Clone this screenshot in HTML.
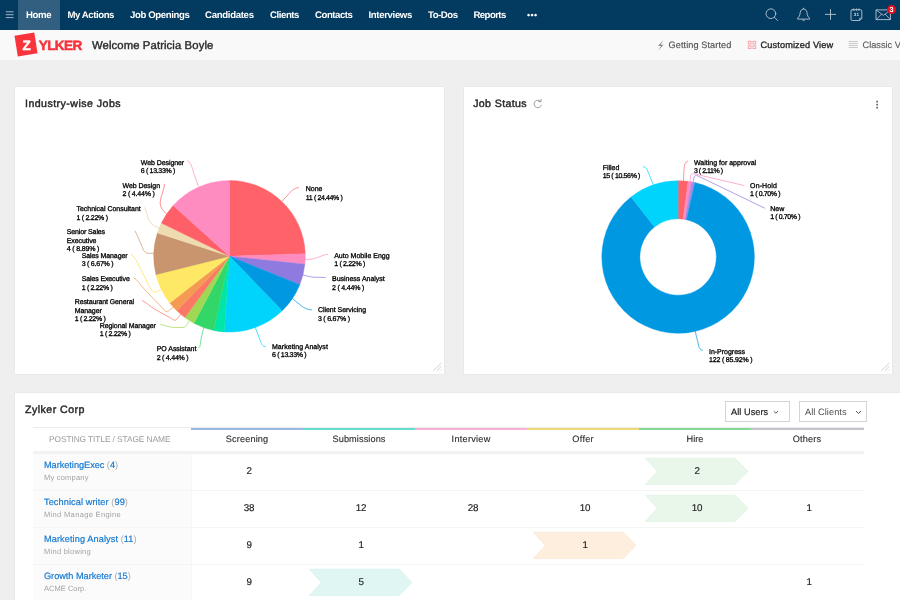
<!DOCTYPE html>
<html><head><meta charset="utf-8"><title>Zylker Recruit</title>
<style>
html,body{margin:0;padding:0;}
body{width:900px;height:600px;overflow:hidden;background:#efefef;font-family:"Liberation Sans", sans-serif;position:relative;}
.t{position:absolute;white-space:nowrap;font-family:"Liberation Sans", sans-serif;}
.t i{font-style:normal;}
.g{font-weight:400;color:#a8a8a8;-webkit-text-stroke:0;}
.abs{position:absolute;}
#nav{left:0;top:0;width:900px;height:30px;background:#033a60;}
#home{left:18px;top:0;width:41.5px;height:30px;background:#325f80;}
#sub{left:0;top:30px;width:900px;height:30px;background:#f9f9f9;}
.card{background:#fff;box-shadow:0 0 1.5px rgba(0,0,0,0.10);}
#c1{left:15px;top:87px;width:429px;height:287px;}
#c2{left:464px;top:87px;width:428px;height:287px;}
#c3{left:15px;top:393px;width:900px;height:220px;}
#logo{left:16.2px;top:33.95px;width:20.2px;height:20.7px;background:#f9343c;transform:rotate(-9deg);}
.dd{border:1px solid #d4d4d4;background:#fff;box-sizing:border-box;height:20.5px;top:401px;}
#firstcol{left:33px;top:453.5px;width:157.5px;height:147px;background:#fbfbfb;border-right:1px solid #f7f7f7;}
#thead{left:33px;top:427.2px;width:831px;height:0.8px;background:#ececec;}
#hband{left:33px;top:451px;width:831px;height:2.8px;background:#f2f2f2;}
.rs{left:33px;width:831px;height:1px;background:#f5f5f5;}
.st{top:428px;height:2px;width:112px;}
</style></head><body>
<div id="nav" class="abs"></div><div id="home" class="abs"></div>
<div id="sub" class="abs"></div>
<div id="logo" class="abs"></div>
<div id="c1" class="abs card"></div><div id="c2" class="abs card"></div><div id="c3" class="abs card"></div>
<div class="abs dd" style="left:725px;width:65px;"></div><div class="abs dd" style="left:799px;width:68px;"></div>
<div id="firstcol" class="abs"></div>
<div id="thead" class="abs"></div><div id="hband" class="abs"></div>
<div class="abs rs" style="top:489.5px"></div><div class="abs rs" style="top:526.5px"></div><div class="abs rs" style="top:563.5px"></div>
<div class="abs st" style="left:191px;background:#97b8df"></div>
<div class="abs st" style="left:303px;background:#68dccf"></div>
<div class="abs st" style="left:415px;background:#f7b1d4"></div>
<div class="abs st" style="left:527px;background:#ecd978"></div>
<div class="abs st" style="left:639px;background:#85da95"></div>
<div class="abs st" style="left:751px;width:113px;background:#c4c4cc"></div>
<svg class="abs" style="left:0;top:0" width="900" height="600" viewBox="0 0 900 600">
<path d="M229.50,256.30L229.50,180.50A75.8,75.8 0 0 1 305.25,253.65Z" fill="#ff6269" stroke="#ff6269" stroke-width="0.4"/>
<path d="M229.50,256.30L305.25,253.65A75.8,75.8 0 0 1 304.88,264.22Z" fill="#ff8bbf" stroke="#ff8bbf" stroke-width="0.4"/>
<path d="M229.50,256.30L304.88,264.22A75.8,75.8 0 0 1 299.78,284.70Z" fill="#8f7be0" stroke="#8f7be0" stroke-width="0.4"/>
<path d="M229.50,256.30L299.78,284.70A75.8,75.8 0 0 1 282.16,310.83Z" fill="#0099e1" stroke="#0099e1" stroke-width="0.4"/>
<path d="M229.50,256.30L282.16,310.83A75.8,75.8 0 0 1 224.21,331.92Z" fill="#00d4fc" stroke="#00d4fc" stroke-width="0.4"/>
<path d="M229.50,256.30L224.21,331.92A75.8,75.8 0 0 1 213.74,330.44Z" fill="#00e5a8" stroke="#00e5a8" stroke-width="0.4"/>
<path d="M229.50,256.30L213.74,330.44A75.8,75.8 0 0 1 193.91,323.23Z" fill="#33d768" stroke="#33d768" stroke-width="0.4"/>
<path d="M229.50,256.30L193.91,323.23A75.8,75.8 0 0 1 184.95,317.62Z" fill="#a0d855" stroke="#a0d855" stroke-width="0.4"/>
<path d="M229.50,256.30L184.95,317.62A75.8,75.8 0 0 1 176.84,310.83Z" fill="#fb7864" stroke="#fb7864" stroke-width="0.4"/>
<path d="M229.50,256.30L176.84,310.83A75.8,75.8 0 0 1 169.77,302.97Z" fill="#f59a52" stroke="#f59a52" stroke-width="0.4"/>
<path d="M229.50,256.30L169.77,302.97A75.8,75.8 0 0 1 155.95,274.64Z" fill="#ffe866" stroke="#ffe866" stroke-width="0.4"/>
<path d="M229.50,256.30L155.95,274.64A75.8,75.8 0 0 1 157.41,232.88Z" fill="#c8956f" stroke="#c8956f" stroke-width="0.4"/>
<path d="M229.50,256.30L157.41,232.88A75.8,75.8 0 0 1 161.37,223.07Z" fill="#eedcb0" stroke="#eedcb0" stroke-width="0.4"/>
<path d="M229.50,256.30L161.37,223.07A75.8,75.8 0 0 1 173.17,205.58Z" fill="#ff5f66" stroke="#ff5f66" stroke-width="0.4"/>
<path d="M229.50,256.30L173.17,205.58A75.8,75.8 0 0 1 229.50,180.50Z" fill="#ff8cc0" stroke="#ff8cc0" stroke-width="0.4"/>
<path d="M678.10,180.70A76.3,76.3 0 0 1 688.20,181.37L683.16,219.14A38.2,38.2 0 0 0 678.10,218.80Z" fill="#ff6269" stroke="#ff6269" stroke-width="0.4"/>
<path d="M688.20,181.37A76.3,76.3 0 0 1 691.53,181.89L684.83,219.40A38.2,38.2 0 0 0 683.16,219.14Z" fill="#ff8cc0" stroke="#ff8cc0" stroke-width="0.4"/>
<path d="M691.53,181.89A76.3,76.3 0 0 1 694.84,182.56L686.48,219.73A38.2,38.2 0 0 0 684.83,219.40Z" fill="#a98be8" stroke="#a98be8" stroke-width="0.4"/>
<path d="M694.84,182.56A76.3,76.3 0 1 1 631.10,196.90L654.57,226.91A38.2,38.2 0 1 0 686.48,219.73Z" fill="#0099e1" stroke="#0099e1" stroke-width="0.4"/>
<path d="M631.10,196.90A76.3,76.3 0 0 1 678.10,180.70L678.10,218.80A38.2,38.2 0 0 0 654.57,226.91Z" fill="#00d4fc" stroke="#00d4fc" stroke-width="0.4"/>
<path d="M187.5,160.8 C190.5,161.5 192,167 193.5,172.5 L198.3,186" fill="none" stroke="#ff8cc0" stroke-width="1" stroke-opacity="0.7" stroke-linecap="round"/>
<path d="M164.5,184.2 C164.5,190 160.5,196 160.2,202 C160,207 162,210 166.5,213.7" fill="none" stroke="#ff5f66" stroke-width="1" stroke-opacity="0.7" stroke-linecap="round"/>
<path d="M144.7,207.7 C147,212 147,217 149.2,220.5 C151,224 154,226 159.3,228" fill="none" stroke="#e8d19d" stroke-width="1" stroke-opacity="0.7" stroke-linecap="round"/>
<path d="M135,231 C138,236 139,240 141,244 C143,249 144,253.3 148,253.3 L153.8,253.3" fill="none" stroke="#c8956f" stroke-width="1" stroke-opacity="0.7" stroke-linecap="round"/>
<path d="M131.4,254.5 C135,257 137,262 139,265.6 L150.1,287.7 C151.5,291 153,293 155.5,292 L160.4,290.1" fill="none" stroke="#ffe050" stroke-width="1" stroke-opacity="0.7" stroke-linecap="round"/>
<path d="M133.9,277.9 C138,280 140,284.5 143.7,288.5 L162.7,308.3 C164.5,310.5 166,313 168.5,311 L173,307.2" fill="none" stroke="#f59a52" stroke-width="1" stroke-opacity="0.7" stroke-linecap="round"/>
<path d="M142.2,300.7 C146,302 149,305.5 153.2,308.3 L170.7,318.1 C173,319.5 175,321.5 177,319 L181,314.3" fill="none" stroke="#fb7864" stroke-width="1" stroke-opacity="0.7" stroke-linecap="round"/>
<path d="M160.4,324.6 C165,325 168,327 172.2,327.3 L182,327.6 C185,327.6 186,326 187,324.5 L189.2,320.7" fill="none" stroke="#a0d855" stroke-width="1" stroke-opacity="0.7" stroke-linecap="round"/>
<path d="M203.7,328 L201,339 C200.3,343 200.8,347 198.8,347.5" fill="none" stroke="#33d768" stroke-width="1" stroke-opacity="0.7" stroke-linecap="round"/>
<path d="M282.5,200.8 L290,192.5 C293,189.5 295,188 298.5,187.5" fill="none" stroke="#ff6670" stroke-width="1" stroke-opacity="0.7" stroke-linecap="round"/>
<path d="M305.3,259.6 C312,259.6 316,258 320,256.5 C323,255.3 325,254.6 327.5,254.3" fill="none" stroke="#ff8cc0" stroke-width="1" stroke-opacity="0.7" stroke-linecap="round"/>
<path d="M303.3,275 C307,276 310,277 314,277.2 L325.3,277.5" fill="none" stroke="#8f7be0" stroke-width="1" stroke-opacity="0.7" stroke-linecap="round"/>
<path d="M292.5,298.7 L301,305.5 C304,308 307,309.5 311.7,310" fill="none" stroke="#0099e1" stroke-width="1" stroke-opacity="0.7" stroke-linecap="round"/>
<path d="M255.3,327.5 L260,340 C261.5,344 262.5,346.5 265.5,346.7" fill="none" stroke="#00d4fc" stroke-width="1" stroke-opacity="0.7" stroke-linecap="round"/>
<path d="M643.3,166.6 C646.5,167 647.5,170 648.7,173.5 L653.1,184.2" fill="none" stroke="#00d4fc" stroke-width="1" stroke-opacity="0.7" stroke-linecap="round"/>
<path d="M687.8,161 C685,162 684.3,165 684.1,168 L683.5,180.8" fill="none" stroke="#ff6670" stroke-width="1" stroke-opacity="0.7" stroke-linecap="round"/>
<path d="M690.2,181.5 L690.4,177 C690.5,174.5 691.5,173.3 694,173.8 L744,185.5" fill="none" stroke="#ff8cc0" stroke-width="1" stroke-opacity="0.7" stroke-linecap="round"/>
<path d="M693.1,182 L693.8,178 C694.3,175.8 695.5,175 698,176 L764.8,208.2" fill="none" stroke="#8f7be0" stroke-width="1" stroke-opacity="0.7" stroke-linecap="round"/>
<path d="M695.3,331.5 L698.5,345 C699.3,348.5 700,350 702.5,350.3" fill="none" stroke="#0099e1" stroke-width="1" stroke-opacity="0.7" stroke-linecap="round"/>
<polygon points="645.3,458.2 735.1,458.2 748.1,471.3 735.1,484.5 645.3,484.5 657.3,471.3" fill="#e9f7ea" stroke="#dcf1dd" stroke-width="0.6"/>
<polygon points="645.3,495.2 735.1,495.2 748.1,508.3 735.1,521.5 645.3,521.5 657.3,508.3" fill="#e9f7ea" stroke="#dcf1dd" stroke-width="0.6"/>
<polygon points="533.3,532.2 623.1,532.2 636.1,545.4 623.1,558.5 533.3,558.5 545.3,545.4" fill="#fdeede" stroke="#fae4cf" stroke-width="0.6"/>
<polygon points="309.3,569.2 399.1,569.2 412.1,582.4 399.1,595.5 309.3,595.5 321.3,582.4" fill="#e0f6f3" stroke="#d0efeb" stroke-width="0.6"/>

<g fill="none" stroke="#c3cfda" stroke-width="0.85" stroke-linecap="round" stroke-linejoin="round">
 <!-- hamburger -->
 <path d="M5.8,11.8h7.8M5.8,14.7h7.8M5.8,17.6h7.8" stroke="#c9d4de" stroke-width="0.8" stroke-linecap="butt"/>
 <!-- search -->
 <circle cx="770.9" cy="13.7" r="4.85"/><path d="M774.4,17.3L777.7,20.5"/>
 <!-- bell -->
 <path d="M797.5,18.7 C797.3,17.6 799.4,17.2 799.9,14.6 C800.2,12.4 800.4,9.2 803.6,8.9 C806.8,9.2 807,12.4 807.3,14.6 C807.8,17.2 809.9,17.6 809.7,18.7 Z"/>
 <path d="M802.6,19.9 L803.6,20.6 L804.6,19.9" stroke-width="0.9"/>
 <path d="M803.6,8.2v0.6" />
 <!-- plus -->
 <path d="M825,14.4H836M830.5,9.1V19.8" stroke-linecap="butt"/>
 <!-- calendar -->
 <path d="M852.2,9.7 h8.4 q1.2,0 1.2,1.2 v7.4 l-2.2,2.2 h-7.4 q-1.2,0 -1.2,-1.2 v-8.4 q0,-1.2 1.2,-1.2 z"/>
 <path d="M859.6,20.4 v-2.1 h2.1" stroke-width="0.7"/>
 <path d="M853.9,8.8v1.7M856.4,8.8v1.7M858.9,8.8v1.7" stroke-width="0.8"/>
 <!-- mail -->
 <rect x="876.4" y="9.9" width="14" height="9.7"/>
 <path d="M876.4,10.1L883.3,15.4L890.3,10.1M876.5,19.4L881.4,14.2M890.2,19.4L885.3,14.2" stroke-width="0.75"/>
</g>
<circle cx="891.6" cy="9.6" r="4.5" fill="#e20f1f"/>
<!-- bolt -->
<path d="M663.3,40.2 L658,46 H661 L658.2,50.4 L663.6,44.8 H660.6 Z" fill="#8a8a8a"/>
<!-- grid -->
<g fill="none" stroke="#f79da1" stroke-width="0.9"><rect x="748.3" y="41.3" width="2.7" height="2.7"/><rect x="753" y="41.3" width="2.7" height="2.7"/><rect x="748.3" y="45.8" width="2.7" height="2.7"/><rect x="753" y="45.8" width="2.7" height="2.7"/></g>
<!-- lines -->
<path d="M848.8,41.5h9.1M848.8,43.5h9.1M848.8,45.5h9.1M848.8,47.5h9.1" stroke="#b5b5b5" stroke-width="0.7"/>
<!-- refresh -->
<g fill="none" stroke="#8c8c8c" stroke-width="0.85"><path d="M540.5,101.4 A3.7,3.7 0 1 0 541.4,104.9"/><path d="M538.7,101.7 H541 V99.4" stroke-linejoin="round" stroke-linecap="round"/></g>
<!-- kebab -->
<g fill="#666"><rect x="876.3" y="100.8" width="1.7" height="1.7"/><rect x="876.3" y="103.8" width="1.7" height="1.7"/><rect x="876.3" y="106.8" width="1.7" height="1.7"/></g>
<!-- resize grips -->
<g stroke="#bbb" stroke-width="0.7"><path d="M433.5,370.5L441.3,363M437,370.5L441.3,366.3M440.2,370.5L441.3,369.4"/><path d="M881.5,370.5L889.3,363M885,370.5L889.3,366.3M888.2,370.5L889.3,369.4"/></g>
<!-- dropdown chevrons -->
<g fill="none" stroke="#444" stroke-width="0.9"><path d="M773.8,411.2L775.9,413.2L778,411.2"/><path d="M856,411L858.5,413.5L861,411"/></g>

</svg>
<div id="txt" style="position:absolute;left:0;top:0;width:900px;height:600px;will-change:transform;text-rendering:geometricPrecision;">
<span id="t0" class="t" style="left:26.0px;top:10px;font-size:9.6px;line-height:12px;font-weight:700;color:#ffffff;letter-spacing:-0.364px;"><i>Home</i></span>
<span id="t1" class="t" style="left:67.5px;top:10px;font-size:9.6px;line-height:12px;font-weight:700;color:#ffffff;letter-spacing:-0.433px;"><i>My Actions</i></span>
<span id="t2" class="t" style="left:130.0px;top:10px;font-size:9.6px;line-height:12px;font-weight:700;color:#ffffff;letter-spacing:-0.372px;"><i>Job Openings</i></span>
<span id="t3" class="t" style="left:205.0px;top:10px;font-size:9.6px;line-height:12px;font-weight:700;color:#ffffff;letter-spacing:-0.302px;"><i>Candidates</i></span>
<span id="t4" class="t" style="left:270.0px;top:10px;font-size:9.6px;line-height:12px;font-weight:700;color:#ffffff;letter-spacing:-0.429px;"><i>Clients</i></span>
<span id="t5" class="t" style="left:315.0px;top:10px;font-size:9.6px;line-height:12px;font-weight:700;color:#ffffff;letter-spacing:-0.443px;"><i>Contacts</i></span>
<span id="t6" class="t" style="left:368.5px;top:10px;font-size:9.6px;line-height:12px;font-weight:700;color:#ffffff;letter-spacing:-0.344px;"><i>Interviews</i></span>
<span id="t7" class="t" style="left:428.0px;top:10px;font-size:9.6px;line-height:12px;font-weight:700;color:#ffffff;letter-spacing:-0.471px;"><i>To-Dos</i></span>
<span id="t8" class="t" style="left:473.5px;top:10px;font-size:9.6px;line-height:12px;font-weight:700;color:#ffffff;letter-spacing:-0.579px;"><i>Reports</i></span>
<span id="t9" class="t" style="left:38.7px;top:37px;font-size:13.6px;line-height:17px;font-weight:700;color:#f7323c;letter-spacing:-0.596px;-webkit-text-stroke:0.5px #f7323c;"><i>YLKER</i></span>
<span id="t10" class="t" style="left:22.5px;top:37px;font-size:13.5px;line-height:17px;font-weight:700;color:#fff;-webkit-text-stroke:0.4px #fff;"><i>Z</i></span>
<span id="t11" class="t" style="left:92.0px;top:39px;font-size:11.3px;line-height:15px;font-weight:400;color:#2a2a2a;letter-spacing:0.105px;-webkit-text-stroke:0.4px #2a2a2a;"><i>Welcome Patricia Boyle</i></span>
<span id="t12" class="t" style="left:668.5px;top:39px;font-size:9.2px;line-height:12px;font-weight:400;color:#505050;letter-spacing:0.074px;-webkit-text-stroke:0.15px #505050;"><i>Getting Started</i></span>
<span id="t13" class="t" style="left:760.5px;top:39px;font-size:9.2px;line-height:12px;font-weight:400;color:#222;letter-spacing:0.132px;-webkit-text-stroke:0.3px #222;"><i>Customized View</i></span>
<span id="t14" class="t" style="left:862.5px;top:39px;font-size:9.2px;line-height:12px;font-weight:400;color:#5a5a5a;letter-spacing:0.007px;-webkit-text-stroke:0.15px #5a5a5a;"><i>Classic View</i></span>
<span id="t15" class="t" style="left:25.0px;top:97px;font-size:10.6px;line-height:14px;font-weight:400;color:#2a2a2a;letter-spacing:0.459px;-webkit-text-stroke:0.45px #2a2a2a;"><i>Industry-wise Jobs</i></span>
<span id="t16" class="t" style="left:473.2px;top:97px;font-size:10.6px;line-height:14px;font-weight:400;color:#2a2a2a;letter-spacing:0.374px;-webkit-text-stroke:0.45px #2a2a2a;"><i>Job Status</i></span>
<span id="t17" class="t" style="left:25.0px;top:403px;font-size:10.6px;line-height:14px;font-weight:400;color:#2a2a2a;letter-spacing:0.477px;-webkit-text-stroke:0.45px #2a2a2a;"><i>Zylker Corp</i></span>
<span id="t18" class="t" style="left:731.0px;top:406px;font-size:9.2px;line-height:12px;font-weight:400;color:#222;letter-spacing:0.048px;-webkit-text-stroke:0.2px #222;"><i>All Users</i></span>
<span id="t19" class="t" style="left:805.0px;top:406px;font-size:9.2px;line-height:12px;font-weight:400;color:#4a4a4a;letter-spacing:0.067px;"><i>All Clients</i></span>
<span id="t20" class="t" style="left:49.0px;top:434px;font-size:8.4px;line-height:11px;font-weight:400;color:#999;letter-spacing:-0.098px;"><i>POSTING TITLE / STAGE NAME</i></span>
<span id="t21" class="t" style="left:147.0px;width:200px;text-align:center;text-indent:0.125px;top:433px;font-size:9.2px;line-height:12px;font-weight:400;color:#2a2a2a;letter-spacing:0.125px;-webkit-text-stroke:0.12px #2a2a2a;"><i>Screening</i></span>
<span id="t22" class="t" style="left:259.0px;width:200px;text-align:center;text-indent:0.082px;top:433px;font-size:9.2px;line-height:12px;font-weight:400;color:#2a2a2a;letter-spacing:0.082px;-webkit-text-stroke:0.12px #2a2a2a;"><i>Submissions</i></span>
<span id="t23" class="t" style="left:371.0px;width:200px;text-align:center;text-indent:0.248px;top:433px;font-size:9.2px;line-height:12px;font-weight:400;color:#2a2a2a;letter-spacing:0.248px;-webkit-text-stroke:0.12px #2a2a2a;"><i>Interview</i></span>
<span id="t24" class="t" style="left:483.0px;width:200px;text-align:center;text-indent:0.247px;top:433px;font-size:9.2px;line-height:12px;font-weight:400;color:#2a2a2a;letter-spacing:0.247px;-webkit-text-stroke:0.12px #2a2a2a;"><i>Offer</i></span>
<span id="t25" class="t" style="left:595.0px;width:200px;text-align:center;text-indent:0.035px;top:433px;font-size:9.2px;line-height:12px;font-weight:400;color:#2a2a2a;letter-spacing:0.035px;-webkit-text-stroke:0.12px #2a2a2a;"><i>Hire</i></span>
<span id="t26" class="t" style="left:707.0px;width:200px;text-align:center;text-indent:0.154px;top:433px;font-size:9.2px;line-height:12px;font-weight:400;color:#2a2a2a;letter-spacing:0.154px;-webkit-text-stroke:0.12px #2a2a2a;"><i>Others</i></span>
<span id="t27" class="t" style="left:44.0px;top:459px;font-size:9.2px;line-height:12px;font-weight:400;color:#1679d0;letter-spacing:-0.034px;-webkit-text-stroke:0.2px #1679d0;"><i>MarketingExec <b class="g">(</b>4<b class="g">)</b></i></span>
<span id="t28" class="t" style="left:44.0px;top:473px;font-size:7.5px;line-height:10px;font-weight:400;color:#a3a3a3;letter-spacing:0.218px;"><i>My company</i></span>
<span id="t29" class="t" style="left:149.0px;width:200px;text-align:center;top:465px;font-size:9.8px;line-height:13px;font-weight:400;color:#1a1a1a;-webkit-text-stroke:0.15px #1a1a1a;letter-spacing:-0.2px;"><i>2</i></span>
<span id="t30" class="t" style="left:597.0px;width:200px;text-align:center;top:465px;font-size:9.8px;line-height:13px;font-weight:400;color:#1a1a1a;-webkit-text-stroke:0.15px #1a1a1a;letter-spacing:-0.2px;"><i>2</i></span>
<span id="t31" class="t" style="left:44.0px;top:496px;font-size:9.2px;line-height:12px;font-weight:400;color:#1679d0;letter-spacing:0.084px;-webkit-text-stroke:0.2px #1679d0;"><i>Technical writer <b class="g">(</b>99<b class="g">)</b></i></span>
<span id="t32" class="t" style="left:44.0px;top:510px;font-size:7.5px;line-height:10px;font-weight:400;color:#a3a3a3;letter-spacing:0.339px;"><i>Mind Manage Engine</i></span>
<span id="t33" class="t" style="left:149.0px;width:200px;text-align:center;top:502px;font-size:9.8px;line-height:13px;font-weight:400;color:#1a1a1a;-webkit-text-stroke:0.15px #1a1a1a;letter-spacing:-0.2px;"><i>38</i></span>
<span id="t34" class="t" style="left:261.0px;width:200px;text-align:center;top:502px;font-size:9.8px;line-height:13px;font-weight:400;color:#1a1a1a;-webkit-text-stroke:0.15px #1a1a1a;letter-spacing:-0.2px;"><i>12</i></span>
<span id="t35" class="t" style="left:373.0px;width:200px;text-align:center;top:502px;font-size:9.8px;line-height:13px;font-weight:400;color:#1a1a1a;-webkit-text-stroke:0.15px #1a1a1a;letter-spacing:-0.2px;"><i>28</i></span>
<span id="t36" class="t" style="left:485.0px;width:200px;text-align:center;top:502px;font-size:9.8px;line-height:13px;font-weight:400;color:#1a1a1a;-webkit-text-stroke:0.15px #1a1a1a;letter-spacing:-0.2px;"><i>10</i></span>
<span id="t37" class="t" style="left:597.0px;width:200px;text-align:center;top:502px;font-size:9.8px;line-height:13px;font-weight:400;color:#1a1a1a;-webkit-text-stroke:0.15px #1a1a1a;letter-spacing:-0.2px;"><i>10</i></span>
<span id="t38" class="t" style="left:709.0px;width:200px;text-align:center;top:502px;font-size:9.8px;line-height:13px;font-weight:400;color:#1a1a1a;-webkit-text-stroke:0.15px #1a1a1a;letter-spacing:-0.2px;"><i>1</i></span>
<span id="t39" class="t" style="left:44.0px;top:533px;font-size:9.2px;line-height:12px;font-weight:400;color:#1679d0;letter-spacing:0.089px;-webkit-text-stroke:0.2px #1679d0;"><i>Marketing Analyst <b class="g">(</b>11<b class="g">)</b></i></span>
<span id="t40" class="t" style="left:44.0px;top:547px;font-size:7.5px;line-height:10px;font-weight:400;color:#a3a3a3;letter-spacing:0.268px;"><i>Mind blowing</i></span>
<span id="t41" class="t" style="left:149.0px;width:200px;text-align:center;top:539px;font-size:9.8px;line-height:13px;font-weight:400;color:#1a1a1a;-webkit-text-stroke:0.15px #1a1a1a;letter-spacing:-0.2px;"><i>9</i></span>
<span id="t42" class="t" style="left:261.0px;width:200px;text-align:center;top:539px;font-size:9.8px;line-height:13px;font-weight:400;color:#1a1a1a;-webkit-text-stroke:0.15px #1a1a1a;letter-spacing:-0.2px;"><i>1</i></span>
<span id="t43" class="t" style="left:485.0px;width:200px;text-align:center;top:539px;font-size:9.8px;line-height:13px;font-weight:400;color:#1a1a1a;-webkit-text-stroke:0.15px #1a1a1a;letter-spacing:-0.2px;"><i>1</i></span>
<span id="t44" class="t" style="left:44.0px;top:570px;font-size:9.2px;line-height:12px;font-weight:400;color:#1679d0;letter-spacing:-0.031px;-webkit-text-stroke:0.2px #1679d0;"><i>Growth Marketer <b class="g">(</b>15<b class="g">)</b></i></span>
<span id="t45" class="t" style="left:44.0px;top:584px;font-size:7.5px;line-height:10px;font-weight:400;color:#a3a3a3;letter-spacing:0.031px;"><i>ACME Corp.</i></span>
<span id="t46" class="t" style="left:149.0px;width:200px;text-align:center;top:576px;font-size:9.8px;line-height:13px;font-weight:400;color:#1a1a1a;-webkit-text-stroke:0.15px #1a1a1a;letter-spacing:-0.2px;"><i>9</i></span>
<span id="t47" class="t" style="left:261.0px;width:200px;text-align:center;top:576px;font-size:9.8px;line-height:13px;font-weight:400;color:#1a1a1a;-webkit-text-stroke:0.15px #1a1a1a;letter-spacing:-0.2px;"><i>5</i></span>
<span id="t48" class="t" style="left:709.0px;width:200px;text-align:center;top:576px;font-size:9.8px;line-height:13px;font-weight:400;color:#1a1a1a;-webkit-text-stroke:0.15px #1a1a1a;letter-spacing:-0.2px;"><i>1</i></span>
<span id="t49" class="t" style="left:140.8px;top:159px;font-size:7.0px;line-height:9px;font-weight:400;color:#000;letter-spacing:-0.078px;-webkit-text-stroke:0.3px #000;"><i>Web Designer</i></span>
<span id="t50" class="t" style="left:140.8px;top:167px;font-size:7.0px;line-height:9px;font-weight:400;color:#000;letter-spacing:-0.328px;-webkit-text-stroke:0.3px #000;"><i>6 ( 13.33% )</i></span>
<span id="t51" class="t" style="left:122.5px;top:182px;font-size:7.0px;line-height:9px;font-weight:400;color:#000;letter-spacing:-0.052px;-webkit-text-stroke:0.3px #000;"><i>Web Design</i></span>
<span id="t52" class="t" style="left:122.5px;top:190px;font-size:7.0px;line-height:9px;font-weight:400;color:#000;letter-spacing:-0.186px;-webkit-text-stroke:0.3px #000;"><i>2 ( 4.44% )</i></span>
<span id="t53" class="t" style="left:76.5px;top:205px;font-size:7.0px;line-height:9px;font-weight:400;color:#000;letter-spacing:-0.020px;-webkit-text-stroke:0.3px #000;"><i>Technical Consultant</i></span>
<span id="t54" class="t" style="left:76.5px;top:214px;font-size:7.0px;line-height:9px;font-weight:400;color:#000;letter-spacing:-0.277px;-webkit-text-stroke:0.3px #000;"><i>1 ( 2.22% )</i></span>
<span id="t55" class="t" style="left:66.7px;top:228px;font-size:7.0px;line-height:9px;font-weight:400;color:#000;letter-spacing:-0.117px;-webkit-text-stroke:0.3px #000;"><i>Senior Sales</i></span>
<span id="t56" class="t" style="left:66.7px;top:237px;font-size:7.0px;line-height:9px;font-weight:400;color:#000;letter-spacing:-0.073px;-webkit-text-stroke:0.3px #000;"><i>Executive</i></span>
<span id="t57" class="t" style="left:66.7px;top:245px;font-size:7.0px;line-height:9px;font-weight:400;color:#000;letter-spacing:-0.159px;-webkit-text-stroke:0.3px #000;"><i>4 ( 8.89% )</i></span>
<span id="t58" class="t" style="left:81.7px;top:252px;font-size:7.0px;line-height:9px;font-weight:400;color:#000;letter-spacing:-0.100px;-webkit-text-stroke:0.3px #000;"><i>Sales Manager</i></span>
<span id="t59" class="t" style="left:81.7px;top:260px;font-size:7.0px;line-height:9px;font-weight:400;color:#000;letter-spacing:-0.232px;-webkit-text-stroke:0.3px #000;"><i>3 ( 6.67% )</i></span>
<span id="t60" class="t" style="left:81.7px;top:275px;font-size:7.0px;line-height:9px;font-weight:400;color:#000;letter-spacing:-0.121px;-webkit-text-stroke:0.3px #000;"><i>Sales Executive</i></span>
<span id="t61" class="t" style="left:81.7px;top:284px;font-size:7.0px;line-height:9px;font-weight:400;color:#000;letter-spacing:-0.314px;-webkit-text-stroke:0.3px #000;"><i>1 ( 2.22% )</i></span>
<span id="t62" class="t" style="left:74.7px;top:298px;font-size:7.0px;line-height:9px;font-weight:400;color:#000;letter-spacing:-0.105px;-webkit-text-stroke:0.3px #000;"><i>Restaurant General</i></span>
<span id="t63" class="t" style="left:74.7px;top:307px;font-size:7.0px;line-height:9px;font-weight:400;color:#000;letter-spacing:-0.092px;-webkit-text-stroke:0.3px #000;"><i>Manager</i></span>
<span id="t64" class="t" style="left:74.7px;top:315px;font-size:7.0px;line-height:9px;font-weight:400;color:#000;letter-spacing:-0.314px;-webkit-text-stroke:0.3px #000;"><i>1 ( 2.22% )</i></span>
<span id="t65" class="t" style="left:99.7px;top:322px;font-size:7.0px;line-height:9px;font-weight:400;color:#000;letter-spacing:-0.063px;-webkit-text-stroke:0.3px #000;"><i>Regional Manager</i></span>
<span id="t66" class="t" style="left:99.7px;top:330px;font-size:7.0px;line-height:9px;font-weight:400;color:#000;letter-spacing:-0.314px;-webkit-text-stroke:0.3px #000;"><i>1 ( 2.22% )</i></span>
<span id="t67" class="t" style="left:156.7px;top:345px;font-size:7.0px;line-height:9px;font-weight:400;color:#000;letter-spacing:-0.032px;-webkit-text-stroke:0.3px #000;"><i>PO Assistant</i></span>
<span id="t68" class="t" style="left:156.7px;top:354px;font-size:7.0px;line-height:9px;font-weight:400;color:#000;letter-spacing:-0.232px;-webkit-text-stroke:0.3px #000;"><i>2 ( 4.44% )</i></span>
<span id="t69" class="t" style="left:305.8px;top:185px;font-size:7.0px;line-height:9px;font-weight:400;color:#000;letter-spacing:-0.009px;-webkit-text-stroke:0.3px #000;"><i>None</i></span>
<span id="t70" class="t" style="left:305.8px;top:194px;font-size:7.0px;line-height:9px;font-weight:400;color:#000;letter-spacing:-0.370px;-webkit-text-stroke:0.3px #000;"><i>11 ( 24.44% )</i></span>
<span id="t71" class="t" style="left:334.2px;top:252px;font-size:7.0px;line-height:9px;font-weight:400;color:#000;letter-spacing:0.015px;-webkit-text-stroke:0.3px #000;"><i>Auto Mobile Engg</i></span>
<span id="t72" class="t" style="left:334.2px;top:260px;font-size:7.0px;line-height:9px;font-weight:400;color:#000;letter-spacing:-0.314px;-webkit-text-stroke:0.3px #000;"><i>1 ( 2.22% )</i></span>
<span id="t73" class="t" style="left:332.0px;top:275px;font-size:7.0px;line-height:9px;font-weight:400;color:#000;letter-spacing:-0.008px;-webkit-text-stroke:0.3px #000;"><i>Business Analyst</i></span>
<span id="t74" class="t" style="left:332.0px;top:284px;font-size:7.0px;line-height:9px;font-weight:400;color:#000;letter-spacing:-0.186px;-webkit-text-stroke:0.3px #000;"><i>2 ( 4.44% )</i></span>
<span id="t75" class="t" style="left:317.9px;top:306px;font-size:7.0px;line-height:9px;font-weight:400;color:#000;letter-spacing:-0.028px;-webkit-text-stroke:0.3px #000;"><i>Client Servicing</i></span>
<span id="t76" class="t" style="left:317.9px;top:315px;font-size:7.0px;line-height:9px;font-weight:400;color:#000;letter-spacing:-0.214px;-webkit-text-stroke:0.3px #000;"><i>3 ( 6.67% )</i></span>
<span id="t77" class="t" style="left:272.0px;top:343px;font-size:7.0px;line-height:9px;font-weight:400;color:#000;letter-spacing:0.038px;-webkit-text-stroke:0.3px #000;"><i>Marketing Analyst</i></span>
<span id="t78" class="t" style="left:272.0px;top:351px;font-size:7.0px;line-height:9px;font-weight:400;color:#000;letter-spacing:-0.320px;-webkit-text-stroke:0.3px #000;"><i>6 ( 13.33% )</i></span>
<span id="t79" class="t" style="left:602.7px;top:164px;font-size:7.0px;line-height:9px;font-weight:400;color:#000;letter-spacing:-0.022px;-webkit-text-stroke:0.3px #000;"><i>Filled</i></span>
<span id="t80" class="t" style="left:602.7px;top:172px;font-size:7.0px;line-height:9px;font-weight:400;color:#000;letter-spacing:-0.356px;-webkit-text-stroke:0.3px #000;"><i>15 ( 10.56% )</i></span>
<span id="t81" class="t" style="left:693.9px;top:159px;font-size:7.0px;line-height:9px;font-weight:400;color:#000;letter-spacing:0.015px;-webkit-text-stroke:0.3px #000;"><i>Waiting for approval</i></span>
<span id="t82" class="t" style="left:693.9px;top:167px;font-size:7.0px;line-height:9px;font-weight:400;color:#000;letter-spacing:-0.465px;-webkit-text-stroke:0.3px #000;"><i>3 ( 2.11% )</i></span>
<span id="t83" class="t" style="left:750.1px;top:182px;font-size:7.0px;line-height:9px;font-weight:400;color:#000;letter-spacing:0.117px;-webkit-text-stroke:0.3px #000;"><i>On-Hold</i></span>
<span id="t84" class="t" style="left:750.1px;top:190px;font-size:7.0px;line-height:9px;font-weight:400;color:#000;letter-spacing:-0.386px;-webkit-text-stroke:0.3px #000;"><i>1 ( 0.70% )</i></span>
<span id="t85" class="t" style="left:770.2px;top:205px;font-size:7.0px;line-height:9px;font-weight:400;color:#000;letter-spacing:0.061px;-webkit-text-stroke:0.3px #000;"><i>New</i></span>
<span id="t86" class="t" style="left:770.2px;top:213px;font-size:7.0px;line-height:9px;font-weight:400;color:#000;letter-spacing:-0.386px;-webkit-text-stroke:0.3px #000;"><i>1 ( 0.70% )</i></span>
<span id="t87" class="t" style="left:709.0px;top:348px;font-size:7.0px;line-height:9px;font-weight:400;color:#000;letter-spacing:-0.017px;-webkit-text-stroke:0.3px #000;"><i>In-Progress</i></span>
<span id="t88" class="t" style="left:709.0px;top:356px;font-size:7.0px;line-height:9px;font-weight:400;color:#000;letter-spacing:-0.173px;-webkit-text-stroke:0.3px #000;"><i>122 ( 85.92% )</i></span>
<span id="t89" class="t" style="left:756.4px;width:200px;text-align:center;top:12px;font-size:4.6px;line-height:6px;font-weight:700;color:#c3cfda;"><i>31</i></span>
<span id="t90" class="t" style="left:791.6px;width:200px;text-align:center;top:5px;font-size:7.2px;line-height:9px;font-weight:700;color:#fff;"><i>3</i></span>
<span id="t91" class="t" style="left:527.0px;top:9px;font-size:9px;line-height:12px;font-weight:700;color:#fff;letter-spacing:0.349px;"><i>•••</i></span>
</div>
</body></html>
